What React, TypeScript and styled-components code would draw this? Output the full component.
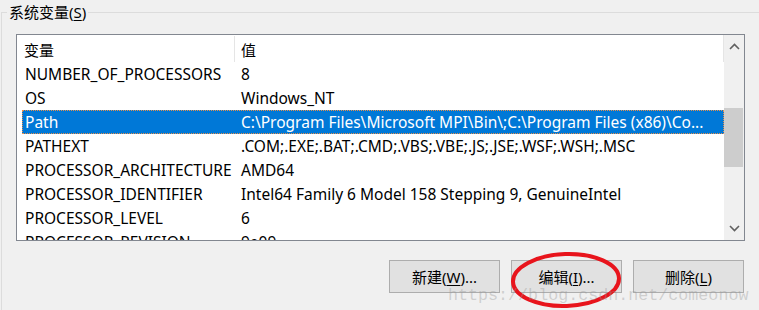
import styled, { createGlobalStyle } from "styled-components";

type EnvVar = { name: string; value: string; selected?: boolean };

const vars: EnvVar[] = [
  { name: "NUMBER_OF_PROCESSORS", value: "8" },
  { name: "OS", value: "Windows_NT" },
  {
    name: "Path",
    value: "C:\\Program Files\\Microsoft MPI\\Bin\\;C:\\Program Files (x86)\\Co...",
    selected: true,
  },
  { name: "PATHEXT", value: ".COM;.EXE;.BAT;.CMD;.VBS;.VBE;.JS;.JSE;.WSF;.WSH;.MSC" },
  { name: "PROCESSOR_ARCHITECTURE", value: "AMD64" },
  { name: "PROCESSOR_IDENTIFIER", value: "Intel64 Family 6 Model 158 Stepping 9, GenuineIntel" },
  { name: "PROCESSOR_LEVEL", value: "6" },
  { name: "PROCESSOR_REVISION", value: "9e09" },
];

export default function App() {
  return (
    <>
      <GlobalStyle />
      <Page>
        <Group>
          <Legend>
            系统变量(<u>S</u>)
          </Legend>

          <ListBox>
            <ListContent>
              <HeaderRow>
                <HeadCell $first>变量</HeadCell>
                <HeadCell>值</HeadCell>
              </HeaderRow>
              {vars.map((v) => (
                <Row key={v.name} $selected={!!v.selected}>
                  <NameCell>{v.name}</NameCell>
                  <ValueCell>{v.value}</ValueCell>
                </Row>
              ))}
            </ListContent>

            <ScrollBar>
              <Arrow>
                <svg width="11" height="7" viewBox="0 0 11 7">
                  <path d="M1 6 L5.5 1.5 L10 6" fill="none" stroke="#606060" strokeWidth="1.6" />
                </svg>
              </Arrow>
              <Track>
                <Thumb />
              </Track>
              <Arrow>
                <svg width="11" height="7" viewBox="0 0 11 7">
                  <path d="M1 1 L5.5 5.5 L10 1" fill="none" stroke="#606060" strokeWidth="1.6" />
                </svg>
              </Arrow>
            </ScrollBar>
          </ListBox>

          <ButtonBar>
            <Btn>
              新建(<u>W</u>)...
            </Btn>
            <Marked>
              <Btn>
                编辑(<u>I</u>)...
              </Btn>
              <Circle width="122" height="60" viewBox="0 0 122 60">
                <ellipse
                  cx="61"
                  cy="30"
                  rx="53"
                  ry="26"
                  fill="none"
                  stroke="#e8141c"
                  strokeWidth="4"
                  transform="rotate(-2 61 30)"
                />
              </Circle>
            </Marked>
            <Btn>
              删除(<u>L</u>)
            </Btn>
          </ButtonBar>

          <Watermark>https://blog.csdn.net/comeonow</Watermark>
        </Group>
      </Page>
    </>
  );
}

const GlobalStyle = createGlobalStyle`
  html, body {
    margin: 0;
    padding: 0;
    background: #f0f0f0;
  }
  body {
    font-family: "Noto Sans", "Noto Sans CJK SC", sans-serif;
    font-size: 15px;
    color: #000;
  }
`;

const Page = styled.div`
  width: 759px;
  height: 310px;
  overflow: hidden;
  background: #f0f0f0;
`;

const Group = styled.fieldset`
  position: relative;
  box-sizing: border-box;
  height: 310px;
  margin: 0 0 0 1px;
  padding: 0;
  min-width: 0;
  border: 1px solid #dcdcdc;
  border-right: none;
  border-bottom: none;
`;

const Legend = styled.legend`
  margin-left: 5px;
  padding: 0 2px;
  line-height: 24px;
  font-size: 15px;
  color: #000;

  u {
    text-decoration-thickness: 1px;
    text-underline-offset: 2px;
  }
`;

const ListBox = styled.div`
  box-sizing: border-box;
  display: grid;
  grid-template-columns: 1fr 20px;
  width: 729px;
  height: 207px;
  margin: 10px 0 0 14px;
  border: 1px solid #828790;
  background: #fff;
  font-size: 15.5px;
`;

const ListContent = styled.div`
  overflow: hidden;
  padding-left: 5px;
`;

const HeaderRow = styled.div`
  display: flex;
  height: 27px;
  align-items: stretch;
  border-right: 1px solid #e5e5e5;
`;

const HeadCell = styled.div<{ $first?: boolean }>`
  display: flex;
  align-items: center;
  box-sizing: border-box;
  width: ${({ $first }) => ($first ? "213px" : "auto")};
  flex: ${({ $first }) => ($first ? "none" : "1")};
  padding-left: ${({ $first }) => ($first ? "2px" : "6px")};
  margin-top: 1px;
  font-size: 15px;
  border-right: ${({ $first }) => ($first ? "1px solid #e5e5e5" : "none")};
`;

const Row = styled.div<{ $selected: boolean }>`
  display: flex;
  align-items: center;
  box-sizing: border-box;
  height: 24px;
  white-space: nowrap;
  background: ${({ $selected }) => ($selected ? "#0078d7" : "transparent")};
  color: ${({ $selected }) => ($selected ? "#fff" : "#000")};
  border: 1px dotted ${({ $selected }) => ($selected ? "#e8904a" : "transparent")};
`;

const NameCell = styled.div`
  box-sizing: border-box;
  width: 212px;
  flex: none;
  padding-left: 2px;
  overflow: hidden;
`;

const ValueCell = styled.div`
  flex: 1;
  padding-left: 6px;
  overflow: hidden;
`;

const ScrollBar = styled.div`
  display: grid;
  grid-template-rows: 23px 1fr 23px;
  background: #f0f0f0;
`;

const Arrow = styled.div`
  display: flex;
  align-items: center;
  justify-content: center;
`;

const Track = styled.div`
  padding-top: 50px;
`;

const Thumb = styled.div`
  height: 59px;
  margin-right: 1px;
  background: #cdcdcd;
`;

const ButtonBar = styled.div`
  display: flex;
  justify-content: flex-end;
  gap: 11px;
  margin: 19px 15px 0 0;
`;

const Marked = styled.div`
  position: relative;
  display: flex;
`;

const Btn = styled.button`
  box-sizing: border-box;
  width: 111px;
  height: 33px;
  padding: 0;
  border: 1px solid #adadad;
  background: #e1e1e1;
  font-family: "Noto Sans", "Noto Sans CJK SC", sans-serif;
  font-size: 15px;
  color: #000;

  u {
    text-decoration-thickness: 1px;
    text-underline-offset: 2px;
  }
`;

const Circle = styled.svg`
  position: absolute;
  left: -6px;
  top: -10px;
  pointer-events: none;
`;

const Watermark = styled.div`
  position: absolute;
  left: 446px;
  top: 262px;
  font-family: "Liberation Mono", monospace;
  font-size: 16.7px;
  color: rgba(150, 150, 150, 0.38);
  white-space: nowrap;
  pointer-events: none;
`;
